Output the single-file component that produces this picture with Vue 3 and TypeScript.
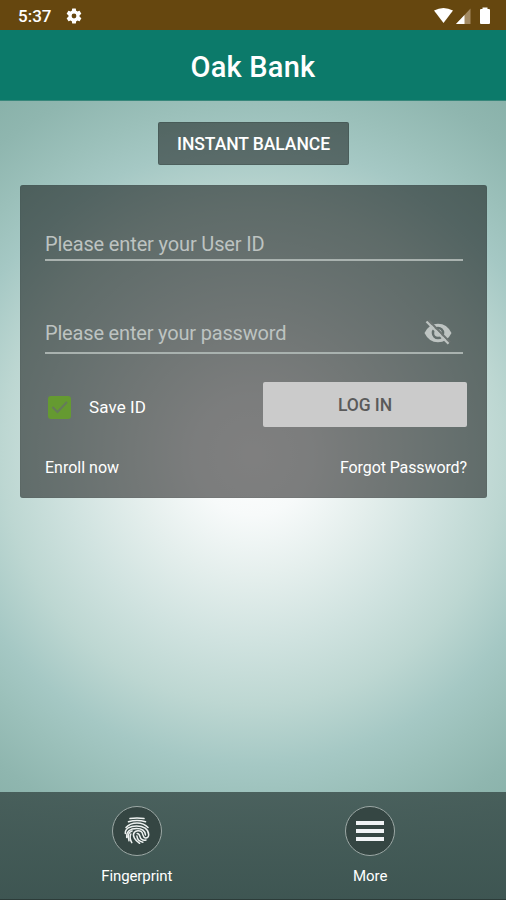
<script setup lang="ts">
import { ref } from 'vue'

const userId = ref('')
const password = ref('')
const saveId = ref(true)
const showPassword = ref(false)
</script>

<template>
  <div class="screen">
    <div class="status">
      <span class="time">5:37</span>
      <svg class="gear" viewBox="0 0 24 24"><path fill="#fff" fill-rule="evenodd" d="M19.4 13c.1-.7.1-1.300 0-2l2.100-1.650c.2-.15.25-.42.12-.64l-2-3.460c-.12-.22-.39-.3-.61-.22l-2.490 1a7.300 7.300 0 0 0-1.690-.98l-.38-2.650A.49.49 0 0 0 14 2h-4a.49.49 0 0 0-.49.420l-.38 2.650c-.61.25-1.170.59-1.690.98l-2.490-1a.5.5 0 0 0-.61.220l-2 3.460a.5.5 0 0 0 .12.640L4.600 11c-.1.700-.1 1.300 0 2l-2.100 1.650a.5.5 0 0 0-.12.640l2 3.460c.12.22.39.300.61.220l2.490-1c.52.400 1.080.73 1.690.98l.38 2.650c.03.240.24.400.49.400h4c.25 0 .46-.18.49-.42l.38-2.650c.61-.25 1.170-.59 1.690-.98l2.490 1c.23.090.49 0 .61-.22l2-3.460a.5.5 0 0 0-.12-.64zM12 15.200a3.200 3.200 0 1 1 0-6.400 3.200 3.200 0 0 1 0 6.400z" /></svg>
      <svg class="signals" viewBox="0 0 58 18">
        <path fill="#fff" d="M1 3.500Q10.500-1.500 20 3.500L10.500 16z" />
        <path fill="#a38a63" d="M37.500 1.500V17H23z" />
        <path fill="#fff" d="M31.500 8V17H23z" />
        <path fill="#fff" d="M47 3q0-1 1-1h1.500V.5h5V2H56q1 0 1 1v13q0 1-1 1h-8q-1 0-1-1z" />
      </svg>
    </div>
    <header class="bar"><h1>Oak Bank</h1></header>

    <main class="content">
      <button class="balance">INSTANT BALANCE</button>
      <form class="panel" @submit.prevent>
        <div class="field user">
          <input v-model="userId" placeholder="Please enter your User ID" />
        </div>
        <div class="field pass">
          <input v-model="password" :type="showPassword ? 'text' : 'password'" placeholder="Please enter your password" />
          <svg class="eye" viewBox="0 0 28 24" @click="showPassword = !showPassword">
            <path fill="#bec4c2" fill-rule="evenodd" d="M.5 12Q5 2.700 14 2.700T27.500 12Q23 21.300 14 21.300T.5 12zM14 5.700a6.300 6.300 0 1 0 0 12.600 6.300 6.300 0 0 0 0-12.600z" />
            <circle cx="14" cy="12" r="3.800" fill="#bec4c2" />
            <path d="M4.500-.7 26 21.300" stroke="#6d7472" stroke-width="2.200" />
            <path d="M2.500.500 24.500 22.800" stroke="#bec4c2" stroke-width="2.200" />
          </svg>
        </div>
        <div class="row">
          <label class="save" @click.prevent="saveId = !saveId">
            <span class="box"><svg v-if="saveId" viewBox="0 0 23 23"><path d="m4.500 11 5 5L19 6" fill="none" stroke="#667a5c" stroke-width="2" /></svg></span>
            <span>Save ID</span>
          </label>
          <button class="login">LOG IN</button>
        </div>
        <div class="links"><a>Enroll now</a><a class="forgot">Forgot Password?</a></div>
      </form>
    </main>

    <nav class="tabs">
      <a class="tab">
        <span class="circle">
          <svg class="print" viewBox="0 0 26 28" fill="none" stroke="#eef2f1" stroke-width="1.500" stroke-linecap="round">
            <path d="M6 1.600Q13 .2 20 1.600M4.500 4.700Q13 2.200 21.500 4.700M2 10.500Q6 6 13 6T24 10.500" />
            <path d="M1.300 16.500C.9 11.500 6 8.900 12.500 8.900c7 0 12 3.300 12.200 8.800 0 2.500-1.700 3.500-3.300 3.200-3.200-.6-1.800-4.200-4-6.100-2-1.700-5.300-1.500-7 .5-2.800 3.600 1 8.200 5.200 11" />
            <path d="M2.700 20.500C2.200 14.500 6 11.600 12.500 11.600c5.300 0 8.500 2 9 6.400M5 23.800C3.300 18.500 5 15 8.200 13.900M7.800 25.600C6 22.500 5.700 19.500 6.800 17M13.200 16.500c3.200 0 2 3.800 4.300 5.700 1.300 1 3 1.300 4.500.8M12.900 19c.3 3 2.700 5.600 6 6.200" />
          </svg>
        </span>
        <span class="fp">Fingerprint</span>
      </a>
      <a class="tab">
        <span class="circle"><span class="menu"><i /><i /><i /></span></span>
        <span>More</span>
      </a>
    </nav>
  </div>
</template>

<style>
body { margin: 0; }
</style>

<style scoped>
* { box-sizing: border-box; }
.screen {
  display: flex;
  flex-direction: column;
  width: 506px;
  height: 900px;
  color: #fff;
  font-family: Roboto, sans-serif;
  background: radial-gradient(circle at 253px 455px, #fff 0, #f7fafa 60px, #e5efed 120px, #cfe2df 190px, #bdd7d2 250px, #a5c8c4 310px, #9bc0ba 350px, #8fb6af 400px, #87b0a8 450px);
  overflow: hidden;
}
.status {
  flex: none;
  height: 30px;
  padding: 0 15px 0 18px;
  display: flex;
  align-items: center;
  background: #66470f;
}
.time { font-size: 17px; font-weight: 500; line-height: 30px; width: 47px; padding-top: 1px; }
.gear { width: 18px; height: 18px; margin-top: 1px; }
.signals { width: 58px; height: 18px; margin-left: auto; margin-top: 1px; }
.bar {
  flex: none;
  height: 71px;
  display: flex;
  align-items: center;
  justify-content: center;
  background: #0c7a6a;
  border-bottom: 1px solid #37877b;
}
h1 { margin: 3px 0 0; font-size: 29px; font-weight: 500; line-height: 34px; letter-spacing: .2px; }
button { font-family: inherit; border: 0; padding: 0; }
.content {
  flex: 1;
  padding: 21px 19px 0 20px;
  display: flex;
  flex-direction: column;
  align-items: center;
}
.balance {
  width: 191px;
  height: 43px;
  border-radius: 2px;
  background: rgba(0, 0, 0, .47);
  border: 1px solid rgba(40, 60, 56, .25);
  color: #fff;
  font-size: 17.500px;
  font-weight: 500;
  letter-spacing: -.06px;
}
.panel {
  width: 467px;
  height: 313px;
  margin-top: 20px;
  padding: 0 20px 0 25px;
  background: rgba(0, 0, 0, .5);
  border-radius: 3px;
  box-shadow: inset 0 0 1px rgba(20, 50, 45, .5);
}
.field { width: 418px; display: flex; align-items: center; border-bottom: 2px solid #a9b2af; }
.user { margin-top: 42px; height: 34px; padding-top: 1px; }
.pass { margin-top: 52px; height: 41px; }
input {
  flex: 1;
  min-width: 0;
  padding: 0;
  border: 0;
  outline: 0;
  background: none;
  color: #fff;
  font: 400 20px Roboto, sans-serif;
  letter-spacing: -.14px;
}
.pass input { letter-spacing: -.18px; }
input::placeholder { color: #bdc3c1; opacity: 1; }
.eye { width: 28px; height: 24px; margin-right: 11px; overflow: visible; }
.row { display: flex; justify-content: space-between; height: 45px; margin-top: 28px; }
.save { display: flex; align-items: center; gap: 18px; margin: 5px 0 0 3px; font-size: 17px; letter-spacing: .1px; }
.box { width: 23px; height: 23px; border-radius: 3px; background: #659a31; }
.box svg { display: block; }
.login { width: 204px; height: 45px; border-radius: 2px; background: #cbcbcb; color: #5a5a5a; font-size: 17.500px; font-weight: 500; letter-spacing: -.1px; }
.links { display: flex; justify-content: space-between; margin-top: 31px; font-size: 16px; line-height: 20px; }
.forgot { letter-spacing: -.1px; }
.tabs {
  flex: none;
  height: 108px;
  padding-left: 20px;
  padding-right: 19px;
  display: flex;
  background: linear-gradient(rgba(60, 80, 77, .85), rgba(56, 78, 75, .92));
  border-bottom: 1px solid #2c3c39;
}
.tab { flex: 1; display: flex; flex-direction: column; align-items: center; padding-top: 14px; font-size: 15px; line-height: 20px; }
.fp { letter-spacing: -.08px; }
.circle {
  display: flex;
  align-items: center;
  justify-content: center;
  width: 50px;
  height: 50px;
  margin-bottom: 10px;
  border: 1.500px solid #9ca8a5;
  border-radius: 50%;
  background: #354643;
}
.print { width: 26px; height: 28px; }
.menu { display: flex; flex-direction: column; gap: 4px; width: 28px; }
.menu i { height: 4px; background: #f0f3f5; }
</style>
